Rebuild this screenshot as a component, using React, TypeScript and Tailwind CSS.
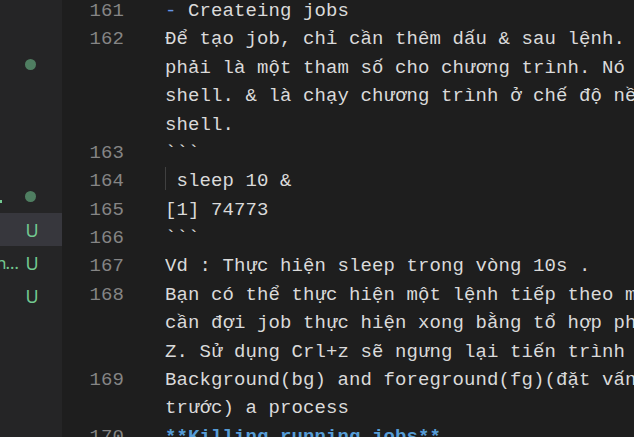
import type { ReactNode } from 'react';

interface EditorLine {
  num?: number;
  content: ReactNode;
  guide?: boolean;
}

const lines: EditorLine[] = [
  {
    num: 161,
    content: (
      <>
        <span className="text-[#6796e6]">-</span> Createing jobs
      </>
    )
  },
  { num: 162, content: 'Để tạo job, chỉ cần thêm dấu & sau lệnh. Dấu & không' },
  { content: 'phải là một tham số cho chương trình. Nó được hiểu bởi' },
  { content: 'shell. & là chạy chương trình ở chế độ nền trong' },
  { content: 'shell.' },
  { num: 163, content: '```' },
  { num: 164, content: ' sleep 10 &', guide: true },
  { num: 165, content: '[1] 74773' },
  { num: 166, content: '```' },
  { num: 167, content: 'Vd : Thực hiện sleep trong vòng 10s .' },
  { num: 168, content: 'Bạn có thể thực hiện một lệnh tiếp theo mà không' },
  { content: 'cần đợi job thực hiện xong bằng tổ hợp phím Ctrl +' },
  { content: 'Z. Sử dụng Crl+z sẽ ngưng lại tiến trình hiện tại.' },
  { num: 169, content: 'Background(bg) and foreground(fg)(đặt vấn đề lên' },
  { content: 'trước) a process' },
  {
    num: 170,
    content: <span className="font-bold text-[#569cd6]">**Killing running jobs**</span>
  }
];

type Decoration = 'dot' | 'U' | null;

interface SideRow {
  deco: Decoration;
  selected?: boolean;
  lead?: ReactNode;
}

// explorer rows are clipped on the left, only git decorations show
const sideRows: SideRow[] = [
  { deco: null },
  { deco: 'dot' },
  { deco: null },
  { deco: null },
  { deco: null },
  { deco: 'dot', lead: <span className="mt-[9px] block h-[3px] w-[2px] bg-[#73c991]" /> },
  { deco: 'U', selected: true },
  { deco: 'U', lead: <span className="-ml-[4px] tracking-[-1px] text-[#73c991]">n…</span> },
  { deco: 'U' }
];

function Sidebar() {
  return (
    <div className="flex w-[62px] shrink-0 flex-col bg-[#252526] pt-[15px] font-['Noto_Sans','Open_Sans',sans-serif]">
      {sideRows.map((row, i) => (
        <div
          key={i}
          className={`flex h-[33px] items-center ${row.selected ? 'bg-[#37373d]' : ''}`}
        >
          <div className="flex h-full w-[22px] items-center overflow-hidden text-[17px] leading-none">
            {row.lead}
          </div>
          <div className="flex w-[20px] justify-center">
            {row.deco === 'dot' && (
              <span className="mr-[4px] block h-[11px] w-[11px] rounded-full bg-[#73c991] opacity-55" />
            )}
            {row.deco === 'U' && (
              <span className="text-[18px] leading-none text-[#73c991]">U</span>
            )}
          </div>
        </div>
      ))}
    </div>
  );
}

export default function App() {
  return (
    <div className="flex h-[437px] w-[634px] overflow-hidden bg-[#1e1e1e]">
      <Sidebar />
      <div className="-mt-[3px] flex-1 font-['Liberation_Mono',monospace] text-[19px] tracking-[0.1px] text-[#dadada]">
        {lines.map((line, i) => (
          <div key={i} className="flex h-[28.4px] items-center whitespace-pre">
            <div className="w-[62px] shrink-0 text-right text-[#858585]">{line.num ?? ''}</div>
            <div className="relative ml-[41px] overflow-hidden whitespace-pre">
              {line.guide && (
                <span className="absolute top-[-6px] left-0 h-[28.4px] w-px bg-[#404040]" />
              )}
              {line.content}
            </div>
          </div>
        ))}
      </div>
    </div>
  );
}
